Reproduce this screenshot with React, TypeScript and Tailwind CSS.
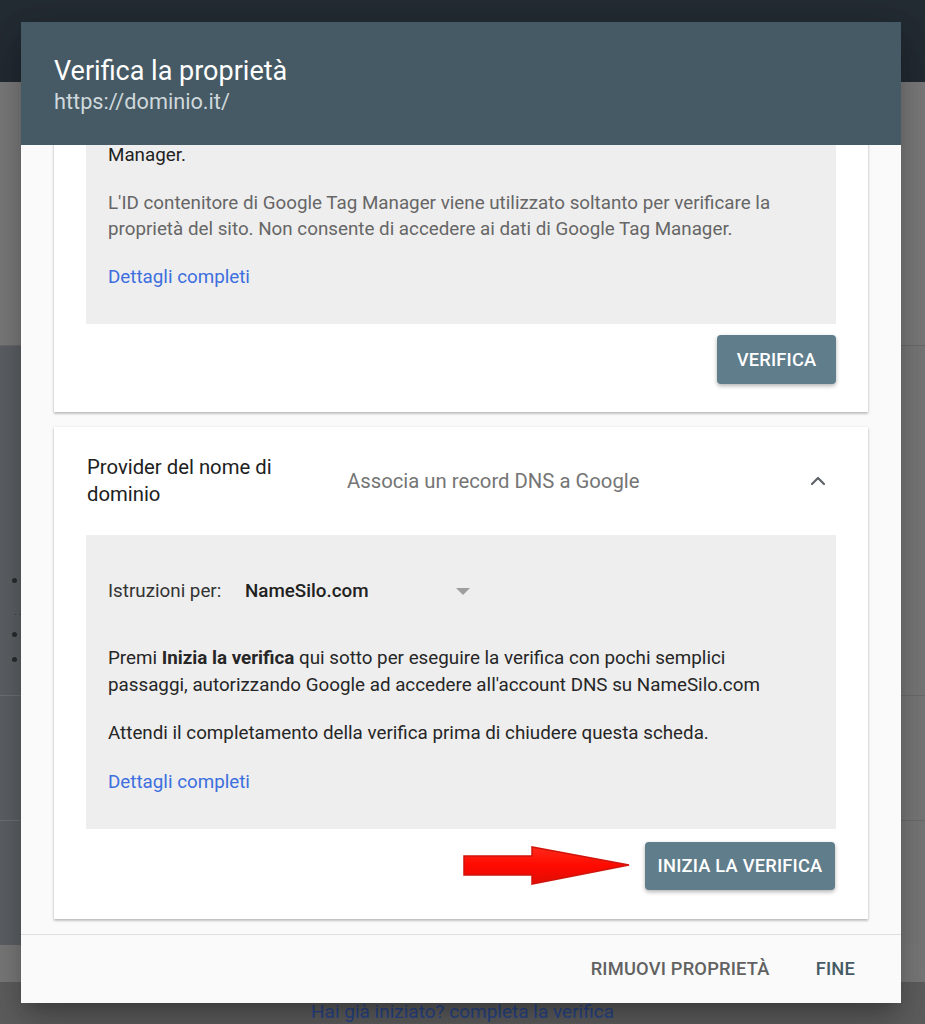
import { ChevronUp } from 'lucide-react';

function RedArrow() {
  return (
    <svg width="170" height="46" viewBox="0 0 170 46" className="shrink-0">
      <defs>
        <linearGradient id="arrowFill" x1="0" y1="0" x2="0" y2="1">
          <stop offset="0" stopColor="#ff2a1a" />
          <stop offset="0.5" stopColor="#ff0a00" />
          <stop offset="1" stopColor="#e00d05" />
        </linearGradient>
      </defs>
      <polygon
        points="2,13 70,13 70,4 167,22 70,41 70,32 2,32"
        fill="url(#arrowFill)"
        stroke="#d0150c"
        strokeWidth="1.5"
        strokeLinejoin="miter"
      />
    </svg>
  );
}

function ActionButton({ label, width }: { label: string; width: string }) {
  return (
    <button
      className={`${width} h-full rounded-[4px] bg-[#607d8b] text-white text-[18.3px] font-medium uppercase tracking-[0.2px] shadow-[0_2px_4px_rgba(0,0,0,0.3)]`}
    >
      {label}
    </button>
  );
}

export default function App() {
  return (
    <div className="relative w-[925px] h-[1024px] overflow-hidden bg-[#7a7a7a] font-['Roboto',sans-serif]">
      {/* page behind the dialog (dimmed) */}
      <div className="h-[82px] bg-[#232b33]" />
      <div className="h-[263px] bg-[#7c7c7c]" />
      <div className="flex h-[600px] border-t border-[#6c6c6c]">
        <div className="w-[60px] bg-[#5e6266] flex flex-col">
          <div className="h-[350px] border-b border-[#6f7377] pl-[12px] pt-[232px] flex flex-col">
            <span className="w-[5px] h-[5px] rounded-full bg-[#2a2d30]" />
            <span className="mt-[26px] ml-[2px] text-[10px] leading-[6px] tracking-[2px] text-[#3a3d40]">...</span>
            <span className="mt-[17px] w-[5px] h-[5px] rounded-full bg-[#2a2d30]" />
            <span className="mt-[20px] w-[5px] h-[5px] rounded-full bg-[#2a2d30]" />
          </div>
          <div className="h-[125px] border-b border-[#6f7377]" />
          <div className="flex-1" />
        </div>
        <div className="flex-1 flex flex-col bg-[#7a7a7a]">
          <div className="h-[350px] border-b border-[#6e6e6e]" />
          <div className="h-[125px] border-b border-[#6e6e6e]" />
        </div>
      </div>
      <div className="h-[37px] bg-[#7b7b7b]" />
      <div className="h-[42px] bg-[#5f5f5f] pt-[19px] text-center">
        <span className="text-[19px] leading-[22px] text-[#29468c]">Hai già iniziato? completa la verifica</span>
      </div>

      {/* dialog */}
      <div className="absolute left-[21px] top-[22px] w-[880px] h-[981px] flex flex-col bg-[#fafafa] shadow-[0_11px_15px_-7px_rgba(0,0,0,0.2),0_24px_38px_3px_rgba(0,0,0,0.14),0_9px_46px_8px_rgba(0,0,0,0.12)]">
        <header className="h-[123px] shrink-0 bg-[#455a64] px-[33px] pt-[33px]">
          <h1 className="text-[27px] leading-[32px] text-white">Verifica la proprietà</h1>
          <div className="mt-[3px] text-[21.7px] leading-[24px] text-[#cfd8dc]">https://dominio.it/</div>
        </header>

        <div className="flex-1 overflow-hidden px-[33px] pb-[15px]">
          {/* Tag Manager card, scrolled partly out of view */}
          <div className="-mt-[20px] bg-white px-[32px] pb-[28px] shadow-[0_1px_3px_rgba(0,0,0,0.2),0_2px_2px_rgba(0,0,0,0.12)]">
            <div className="bg-[#eeeeee] pl-[22px] pr-[40px] pt-[17px] pb-[34px] text-[18.8px] leading-[26px]">
              <p className="text-[#212121]">Manager.</p>
              <p className="mt-[22px] text-[#666666]">
                L'ID contenitore di Google Tag Manager viene utilizzato soltanto per verificare la proprietà del sito. Non consente di accedere ai dati di Google Tag Manager.
              </p>
              <p className="mt-[22px] text-[#3d6fde]">Dettagli completi</p>
            </div>
            <div className="mt-[11px] h-[49px] flex justify-end">
              <ActionButton label="Verifica" width="w-[119px]" />
            </div>
          </div>

          {/* DNS provider card */}
          <div className="mt-[15px] bg-white pb-[29px] shadow-[0_1px_3px_rgba(0,0,0,0.2),0_2px_2px_rgba(0,0,0,0.12)]">
            <div className="flex items-center py-[27px] pl-[33px] pr-[38px] text-[20.3px] leading-[27px]">
              <div className="w-[260px] shrink-0">
                <div className="w-[215px] text-[#212121]">Provider del nome di dominio</div>
              </div>
              <div className="flex-1 text-[#757575]">Associa un record DNS a Google</div>
              <ChevronUp className="w-[24px] h-[24px] text-[#5f6368]" strokeWidth={2.2} />
            </div>
            <div className="mx-[32px] bg-[#eeeeee] pl-[22px] pr-[40px] pt-[32px] pb-[33px] text-[18.8px] leading-[27px]">
              <div className="h-[48px] flex items-center">
                <span className="w-[137px] text-[#333333]">Istruzioni per:</span>
                <div className="w-[235px] flex items-center justify-between pr-[10px]">
                  <span className="font-medium text-[#212121]">NameSilo.com</span>
                  <span className="w-0 h-0 border-l-[7px] border-r-[7px] border-t-[7px] border-l-transparent border-r-transparent border-t-[#9e9e9e]" />
                </div>
              </div>
              <p className="mt-[30px] text-[#262626]">
                Premi <b className="font-bold">Inizia la verifica</b> qui sotto per eseguire la verifica con pochi semplici passaggi, autorizzando Google ad accedere all'account DNS su NameSilo.com
              </p>
              <p className="mt-[21px] text-[#262626]">Attendi il completamento della verifica prima di chiudere questa scheda.</p>
              <p className="mt-[22px] text-[#3d6fde]">Dettagli completi</p>
            </div>
            <div className="mt-[13px] h-[48px] px-[33px] flex items-center justify-end gap-[13px]">
              <RedArrow />
              <ActionButton label="Inizia la verifica" width="w-[190px]" />
            </div>
          </div>
        </div>

        <footer className="h-[69px] shrink-0 border-t border-[#e0e0e0] flex items-center justify-end gap-[46px] pr-[46px] text-[18.3px] font-medium uppercase tracking-[0.2px]">
          <button className="text-[#616161] uppercase">Rimuovi proprietà</button>
          <button className="text-[#455a64] uppercase">Fine</button>
        </footer>
      </div>
    </div>
  );
}
